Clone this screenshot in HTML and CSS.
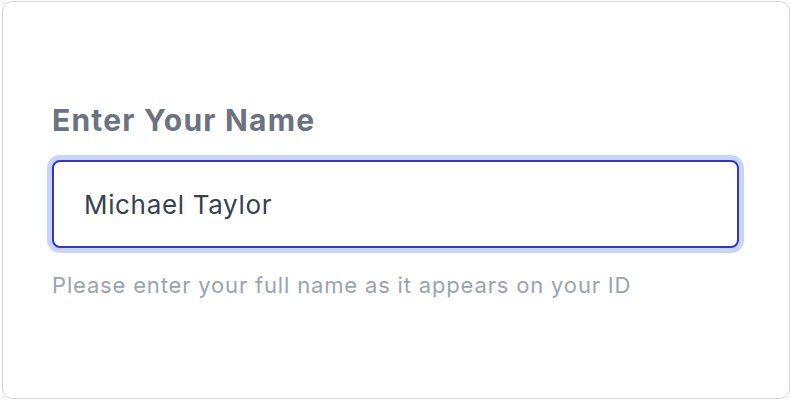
FILE: index.html
```html
<!DOCTYPE html>
<html>
<head>
<meta charset="utf-8">
<link rel="stylesheet" href="styles.css">
</head>
<body>
<div class="card">
  <div class="field">
    <label class="label" for="name">Enter Your Name</label>
    <input class="input" id="name" type="text" value="Michael Taylor">
    <p class="help">Please enter your full name as it appears on your ID</p>
  </div>
</div>
</body>
</html>
```

FILE: styles.css
```css
* { box-sizing: border-box; }
html, body { margin: 0; padding: 0; background: #ffffff; }
body { padding: 1px 0 0 2px; font-family: Inter, "Noto Sans", sans-serif; }
.card {
  width: 788px;
  height: 398px;
  border: 1px solid #d4d6db;
  border-radius: 10px;
  background: #fff;
  padding: 100px 49px 0;
}
.field { display: flex; flex-direction: column; }
.label {
  font-size: 30px;
  font-weight: 700;
  line-height: 36px;
  letter-spacing: 1.2px;
  color: #6b7280;
  margin-bottom: 22px;
}
.input {
  width: 687px;
  height: 88px;
  border: 2px solid #3434c8;
  border-radius: 8px;
  box-shadow: 0 0 0 5px #c7d5fc;
  padding: 0 30px;
  font-family: Inter, "Noto Sans", sans-serif;
  font-size: 26px;
  letter-spacing: 0.66px;
  color: #374151;
  outline: none;
  background: #fff;
}
.help {
  margin: 23px 0 0;
  font-size: 22px;
  line-height: 28px;
  letter-spacing: 0.83px;
  color: #9ca3af;
}
```
